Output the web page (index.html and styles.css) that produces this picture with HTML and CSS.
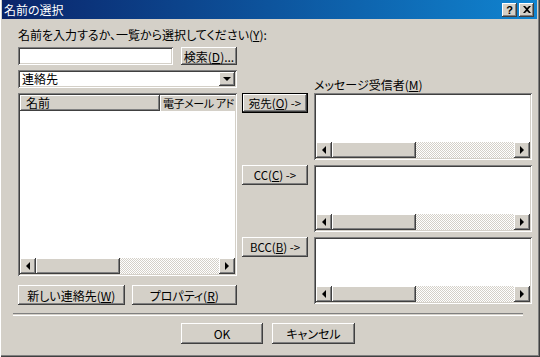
FILE: index.html
```html
<!DOCTYPE html>
<html lang="ja">
<head>
  <meta charset="UTF-8">
  <title>名前の選択</title>
  <link rel="stylesheet" href="styles.css">
</head>
<body>

<div class="window">
  <div class="titlebar">
    <span class="title">名前の選択</span>
    <div class="caption-buttons">
      <div class="cap-btn help">?</div>
      <div class="cap-btn close">
        <svg width="8" height="7" viewBox="0 0 8 7"><path d="M0 0h2l2 2 2-2h2L5 3.5 8 7H6L4 5 2 7H0l3-3.5z" fill="#000"/></svg>
      </div>
    </div>
  </div>

  <div class="content">
    <div class="main">
      <div class="left">
        <div class="prompt">名前を入力するか、一覧から選択してください(<u>Y</u>):</div>
        <div class="search-row">
          <div class="field name-input"></div>
          <button class="btn search-btn">検索(<u>D</u>)...</button>
        </div>
        <div class="field combo">
          <span class="combo-text">連絡先</span>
          <div class="combo-arrow"><span class="tri-down"></span></div>
        </div>
        <div class="field list">
          <div class="list-header">
            <div class="col-head col-name">名前</div>
            <div class="col-head col-mail">電子メール アド</div>
          </div>
          <div class="list-body"></div>
          <div class="hscroll">
            <div class="sb-arrow"><span class="tri-left"></span></div>
            <div class="sb-thumb"></div>
            <div class="sb-track"></div>
            <div class="sb-arrow"><span class="tri-right"></span></div>
          </div>
        </div>
        <div class="list-buttons">
          <button class="btn new-btn">新しい連絡先(<u>W</u>)</button>
          <button class="btn prop-btn">プロパティ(<u>R</u>)</button>
        </div>
      </div>

      <div class="right">
        <div class="recip-label">メッセージ受信者(<u>M</u>)</div>

        <div class="recip-row">
          <button class="btn add-btn default">宛先(<u>O</u>) -&gt;</button>
          <div class="field recip-box">
            <div class="recip-body"></div>
            <div class="hscroll">
              <div class="sb-arrow"><span class="tri-left"></span></div>
              <div class="sb-thumb"></div>
              <div class="sb-track"></div>
              <div class="sb-arrow"><span class="tri-right"></span></div>
            </div>
          </div>
        </div>

        <div class="recip-row">
          <button class="btn add-btn">CC(<u>C</u>) -&gt;</button>
          <div class="field recip-box">
            <div class="recip-body"></div>
            <div class="hscroll">
              <div class="sb-arrow"><span class="tri-left"></span></div>
              <div class="sb-thumb"></div>
              <div class="sb-track"></div>
              <div class="sb-arrow"><span class="tri-right"></span></div>
            </div>
          </div>
        </div>

        <div class="recip-row">
          <button class="btn add-btn">BCC(<u>B</u>) -&gt;</button>
          <div class="field recip-box">
            <div class="recip-body"></div>
            <div class="hscroll">
              <div class="sb-arrow"><span class="tri-left"></span></div>
              <div class="sb-thumb"></div>
              <div class="sb-track"></div>
              <div class="sb-arrow"><span class="tri-right"></span></div>
            </div>
          </div>
        </div>
      </div>
    </div>

    <div class="separator"></div>

    <div class="dialog-buttons">
      <button class="btn ok-btn">OK</button>
      <button class="btn cancel-btn">キャンセル</button>
    </div>
  </div>
</div>

</body>
</html>
```

FILE: styles.css
```css
body {
  margin: 0;
  font-family: "Noto Sans CJK JP", "Liberation Sans", sans-serif;
  font-size: 12px;
  font-feature-settings: "palt";
  color: #000;
}

.window {
  width: 540px;
  height: 357px;
  box-sizing: border-box;
  background: #d4d0c8;
  padding: 0 3px 0 2px;
  box-shadow: inset 1px 0 #fff, inset -1px -1px #404040, inset -2px -2px #808080;
  overflow: hidden;
}

.titlebar {
  height: 19px;
  background: linear-gradient(90deg, #0a246a, #1084d0);
  color: #fff;
  display: flex;
  align-items: center;
  justify-content: space-between;
  padding: 0 3px 0 2px;
}

.title {
  font-size: 12px;
  line-height: 19px;
}

.caption-buttons {
  display: flex;
  gap: 2px;
}

.cap-btn {
  width: 15px;
  height: 14px;
  background: #d4d0c8;
  box-shadow: inset -1px -1px #404040, inset 1px 1px #fff, inset -2px -2px #808080;
  display: flex;
  align-items: center;
  justify-content: center;
  color: #000;
  font-family: "Liberation Sans", sans-serif;
  font-weight: bold;
  font-size: 11px;
  line-height: 14px;
}

.content {
  padding: 8px 0 0 16px;
}

.main {
  display: flex;
  align-items: flex-start;
}

.left {
  width: 219px;
  display: flex;
  flex-direction: column;
}

.prompt {
  height: 16px;
  line-height: 16px;
  margin-bottom: 4px;
  white-space: nowrap;
}

.btn {
  background: #d4d0c8;
  border: none;
  padding: 0;
  font: inherit;
  color: #000;
  box-shadow: inset -1px -1px #404040, inset 1px 1px #fff, inset -2px -2px #808080;
  white-space: nowrap;
}

.btn.default {
  box-shadow: inset 0 0 0 1px #000, inset -2px -2px #404040, inset 2px 2px #fff, inset -3px -3px #808080;
}

.field {
  background: #fff;
  box-sizing: border-box;
  padding: 2px;
  box-shadow: inset 1px 1px #808080, inset -1px -1px #fff, inset 2px 2px #404040, inset -2px -2px #d4d0c8;
}

.search-row {
  display: flex;
  justify-content: space-between;
  height: 18px;
}

.name-input {
  width: 155px;
}

.search-btn {
  width: 56px;
}

.combo {
  margin-top: 5px;
  height: 18px;
  display: flex;
  align-items: center;
  justify-content: space-between;
}

.combo-text {
  padding-left: 2px;
  line-height: 14px;
}

.combo-arrow {
  width: 16px;
  height: 14px;
  background: #d4d0c8;
  box-shadow: inset -1px -1px #404040, inset 1px 1px #fff, inset -2px -2px #808080;
  display: flex;
  align-items: center;
  justify-content: center;
}

.tri-down {
  width: 0;
  height: 0;
  border-left: 4px solid transparent;
  border-right: 4px solid transparent;
  border-top: 4px solid #000;
}

.tri-left {
  width: 0;
  height: 0;
  border-top: 4px solid transparent;
  border-bottom: 4px solid transparent;
  border-right: 4px solid #000;
}

.tri-right {
  width: 0;
  height: 0;
  border-top: 4px solid transparent;
  border-bottom: 4px solid transparent;
  border-left: 4px solid #000;
}

.list {
  margin-top: 5px;
  height: 183px;
  display: flex;
  flex-direction: column;
}

.list-header {
  display: flex;
  height: 16px;
  overflow: hidden;
}

.col-head {
  background: #d4d0c8;
  box-shadow: inset -1px -1px #404040, inset 1px 1px #fff, inset -2px -2px #808080;
  line-height: 16px;
  padding-left: 6px;
  box-sizing: border-box;
  white-space: nowrap;
  overflow: hidden;
}

.col-name {
  width: 140px;
  flex-shrink: 0;
}

.col-mail {
  flex: 1;
  min-width: 0;
  padding-left: 3px;
  font-size: 11px;
  letter-spacing: -0.4px;
  box-shadow: inset 1px 1px #fff;
}

.list-body {
  flex: 1;
}

.hscroll {
  display: flex;
  height: 16px;
}

.sb-arrow {
  width: 16px;
  height: 16px;
  background: #d4d0c8;
  box-shadow: inset -1px -1px #404040, inset 1px 1px #fff, inset -2px -2px #808080;
  display: flex;
  align-items: center;
  justify-content: center;
  flex-shrink: 0;
}

.sb-thumb {
  width: 84px;
  background: #d4d0c8;
  box-shadow: inset -1px -1px #404040, inset 1px 1px #fff, inset -2px -2px #808080;
  flex-shrink: 0;
}

.sb-track {
  flex: 1;
  background-color: #d4d0c8;
  background-image: conic-gradient(#fff 25%, #d4d0c8 0 50%, #fff 0 75%, #d4d0c8 0);
  background-size: 2px 2px;
}

.list-buttons {
  margin-top: 9px;
  display: flex;
  gap: 7px;
}

.list-buttons .btn {
  height: 20px;
}

.new-btn {
  width: 108px;
}

.prop-btn {
  width: 107px;
}

.right {
  margin-left: 5px;
  padding-top: 51px;
}

.recip-label {
  height: 15px;
  line-height: 14px;
  margin-left: 72px;
}

.recip-row {
  display: flex;
  align-items: flex-start;
  gap: 6px;
  margin-bottom: 5px;
}

.add-btn {
  width: 66px;
  height: 20px;
  font-size: 11.5px;
}

.recip-box {
  width: 218px;
  height: 67px;
  display: flex;
  flex-direction: column;
}

.recip-body {
  flex: 1;
}

.separator {
  margin: 4px 0 0 -5px;
  width: 510px;
  height: 1px;
  border-top: 1px solid #808080;
  border-bottom: 1px solid #fff;
}

.dialog-buttons {
  margin: 7px 0 0 163px;
  display: flex;
  gap: 9px;
}

.dialog-buttons .btn {
  height: 21px;
}

.ok-btn {
  width: 82px;
}

.cancel-btn {
  width: 83px;
}
```
